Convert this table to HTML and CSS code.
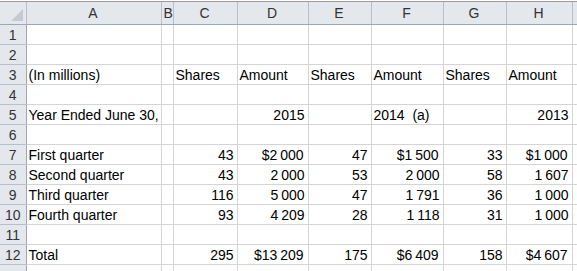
FILE: index.html
```html
<!DOCTYPE html>
<html lang="en">
<head>
  <meta charset="UTF-8" />
  <title>Shares repurchased</title>
  <link rel="stylesheet" href="styles.css">
</head>
<body>
  <div class="topbar"></div>
  <table class="sheet">
    <colgroup>
      <col class="c-row"><col class="c-a"><col class="c-b"><col class="c-c"><col class="c-d">
      <col class="c-e"><col class="c-f"><col class="c-g"><col class="c-h"><col class="c-rest">
    </colgroup>
    <thead>
      <tr>
        <th class="corner"><span class="tri"></span></th>
        <th>A</th><th>B</th><th>C</th><th>D</th><th>E</th><th>F</th><th>G</th><th>H</th><th class="rest"></th>
      </tr>
    </thead>
    <tbody>
      <tr><th>1</th><td></td><td></td><td></td><td></td><td></td><td></td><td></td><td></td><td class="rest"></td></tr>
      <tr><th>2</th><td></td><td></td><td></td><td></td><td></td><td></td><td></td><td></td><td class="rest"></td></tr>
      <tr><th>3</th><td>(In millions)</td><td></td><td>Shares</td><td>Amount</td><td>Shares</td><td>Amount</td><td>Shares</td><td>Amount</td><td class="rest"></td></tr>
      <tr><th>4</th><td></td><td></td><td></td><td></td><td></td><td></td><td></td><td></td><td class="rest"></td></tr>
      <tr><th>5</th><td class="over">Year Ended June 30,</td><td></td><td></td><td class="num">2015</td><td></td><td>2014&nbsp; (a)</td><td></td><td class="num">2013</td><td class="rest"></td></tr>
      <tr><th>6</th><td></td><td></td><td></td><td></td><td></td><td></td><td></td><td></td><td class="rest"></td></tr>
      <tr><th>7</th><td>First quarter</td><td></td><td class="num">43</td><td class="num cur">$2&#8201;000</td><td class="num">47</td><td class="num cur">$1&#8201;500</td><td class="num">33</td><td class="num cur">$1&#8201;000</td><td class="rest"></td></tr>
      <tr><th>8</th><td>Second quarter</td><td></td><td class="num">43</td><td class="num">2&#8201;000</td><td class="num">53</td><td class="num">2&#8201;000</td><td class="num">58</td><td class="num">1&#8201;607</td><td class="rest"></td></tr>
      <tr><th>9</th><td>Third quarter</td><td></td><td class="num">116</td><td class="num">5&#8201;000</td><td class="num">47</td><td class="num">1&#8201;791</td><td class="num">36</td><td class="num">1&#8201;000</td><td class="rest"></td></tr>
      <tr><th>10</th><td>Fourth quarter</td><td></td><td class="num">93</td><td class="num">4&#8201;209</td><td class="num">28</td><td class="num">1&#8201;118</td><td class="num">31</td><td class="num">1&#8201;000</td><td class="rest"></td></tr>
      <tr><th>11</th><td></td><td></td><td></td><td></td><td></td><td></td><td></td><td></td><td class="rest"></td></tr>
      <tr><th>12</th><td>Total</td><td></td><td class="num">295</td><td class="num cur">$13&#8201;209</td><td class="num">175</td><td class="num cur">$6&#8201;409</td><td class="num">158</td><td class="num cur">$4&#8201;607</td><td class="rest"></td></tr>
      <tr class="last"><th></th><td></td><td></td><td></td><td></td><td></td><td></td><td></td><td></td><td class="rest"></td></tr>
    </tbody>
  </table>
</body>
</html>
```

FILE: styles.css
```css
/* Base */
* {
  box-sizing: border-box;
  margin: 0;
  padding: 0;
}
html, body {
  height: 271px;
  overflow: hidden;
}
body {
  font-family: 'Liberation Sans', Arial, sans-serif;
  font-size: 14px;
  color: #000;
  background: #fff;
}

/* Strip above the column headers */
.topbar {
  height: 3px;
  border-bottom: 1px solid #9a9a9a;
  background: #fff;
  margin-top: -1px;
}

/* Sheet grid */
.sheet {
  border-collapse: collapse;
  table-layout: fixed;
  width: 583px;
}
.c-row { width: 26px; }
.c-a { width: 135px; }
.c-b { width: 12px; }
.c-c { width: 64px; }
.c-d { width: 71px; }
.c-e { width: 63px; }
.c-f { width: 72px; }
.c-g { width: 63px; }
.c-h { width: 66px; }
.c-rest { width: 11px; }

.sheet td,
.sheet th {
  height: 20px;
  padding: 0 3px 0 2px;
  white-space: nowrap;
  overflow: hidden;
  vertical-align: bottom;
  line-height: 17px;
}
.sheet td {
  border: 1px solid #d4d4d4;
  border-top: none;
  border-left: none;
  text-align: left;
}
.sheet td.over { overflow: visible; }
.sheet tr.last td,
.sheet tr.last th { height: 8px; }

/* Column and row headers */
.sheet thead th {
  height: 22px;
  background: #e4e7ec;
  border-right: 1px solid #b9bfc8;
  border-bottom: 1px solid #9ea6b2;
  font-weight: normal;
  color: #333;
  text-align: center;
  vertical-align: middle;
  line-height: 20px;
}
.sheet tbody th {
  background: #e4e7ec;
  border-right: 1px solid #9ea6b2;
  border-bottom: 1px solid #b9bfc8;
  font-weight: normal;
  color: #333;
  text-align: center;
  padding: 0;
}
.sheet thead th.rest,
.sheet td.rest {
  border-right: none;
}

/* Select-all corner */
.corner {
  position: relative;
}
.tri {
  position: absolute;
  right: 3px;
  bottom: 3px;
  width: 0;
  height: 0;
  border-left: 12px solid transparent;
  border-bottom: 12px solid #c6cad0;
}

/* Numbers */
.num { text-align: right !important; }
.cur { padding-right: 4px !important; }
```
